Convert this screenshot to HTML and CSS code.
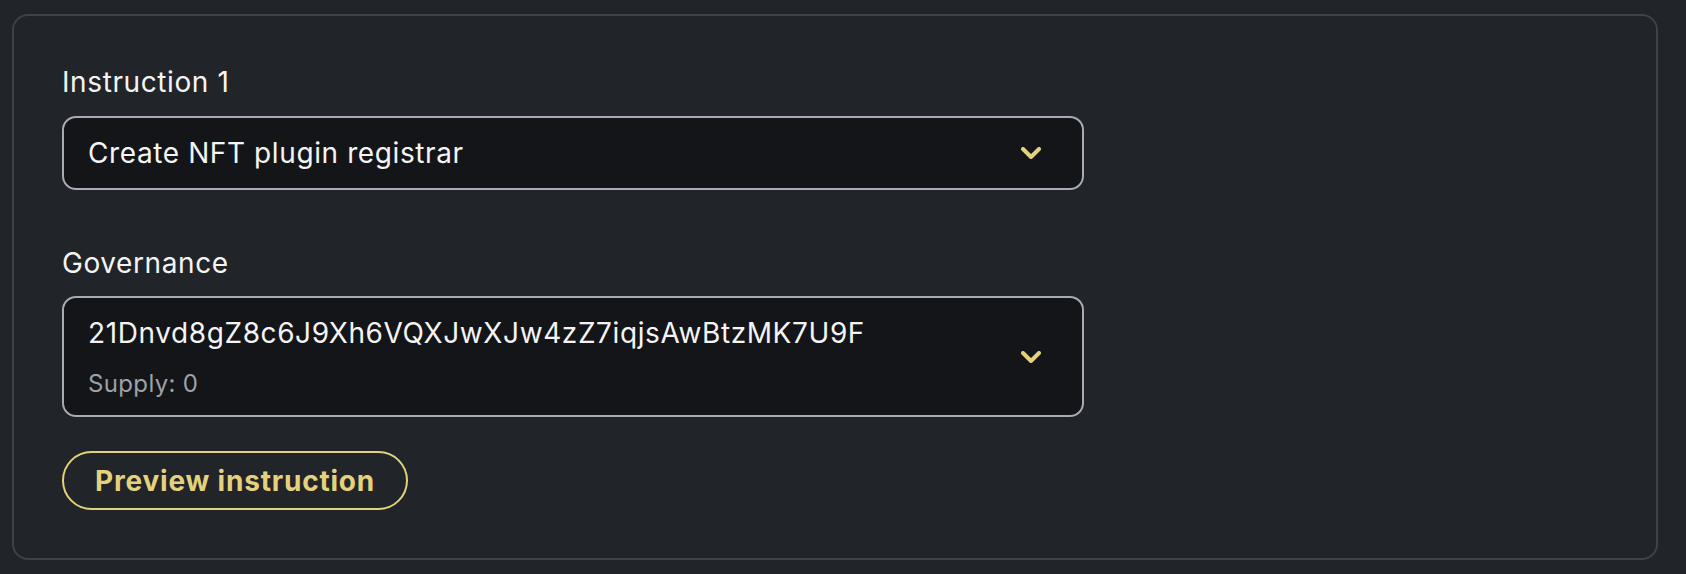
FILE: index.html
```html
<!DOCTYPE html>
<html lang="en">
<head>
<meta charset="utf-8">
<title>Instruction</title>
<link rel="stylesheet" href="styles.css">
</head>
<body>
  <div class="card">
    <div class="field">
      <div class="label">Instruction 1</div>
      <div class="select">
        <div class="select-value">
          <div class="primary">Create NFT plugin registrar</div>
        </div>
        <svg class="chevron" width="20" height="12" viewBox="0 0 20 12" aria-hidden="true"><polyline points="2,2 10,10 18,2" fill="none" stroke="currentColor" stroke-width="4" stroke-linecap="round" stroke-linejoin="round"/></svg>
      </div>
    </div>
    <div class="field field-gov">
      <div class="label label-gov">Governance</div>
      <div class="select select-tall">
        <div class="select-value">
          <div class="primary">21Dnvd8gZ8c6J9Xh6VQXJwXJw4zZ7iqjsAwBtzMK7U9F</div>
          <div class="secondary">Supply: 0</div>
        </div>
        <svg class="chevron" width="20" height="12" viewBox="0 0 20 12" aria-hidden="true"><polyline points="2,2 10,10 18,2" fill="none" stroke="currentColor" stroke-width="4" stroke-linecap="round" stroke-linejoin="round"/></svg>
      </div>
    </div>
    <button class="preview-btn" type="button">Preview instruction</button>
  </div>
</body>
</html>
```
FILE: styles.css
```css
html {
  background: #212429;
}
body {
  margin: 14px 28px 14px 12px;
  background: #212429;
  font-family: Inter, "Noto Sans", sans-serif;
  color: #f4f4f5;
}
.card {
  box-sizing: border-box;
  width: 1646px;
  border: 2px solid #3e4249;
  border-radius: 16px;
  padding: 46px 48px 48px 48px;
  display: flex;
  flex-direction: column;
  align-items: flex-start;
}
.field {
  display: flex;
  flex-direction: column;
  width: 1022px;
}
.field-gov {
  margin-top: 53px;
}
.label {
  font-size: 28px;
  line-height: 40px;
  letter-spacing: 0.6px;
  margin-bottom: 14px;
  color: #f4f4f5;
}
.label-gov {
  margin-bottom: 13px;
}
.select {
  box-sizing: border-box;
  width: 1022px;
  display: flex;
  align-items: center;
  justify-content: space-between;
  background: #141518;
  border: 2px solid #a7abb3;
  border-radius: 14px;
  padding: 15px 41px 15px 24px;
}
.select-tall {
  padding-top: 15px;
  padding-bottom: 15px;
}
.select-value {
  display: flex;
  flex-direction: column;
  gap: 15px;
}
.primary {
  font-size: 28px;
  line-height: 40px;
  letter-spacing: 0.6px;
  color: #f4f4f5;
}
.secondary {
  font-size: 24px;
  line-height: 32px;
  letter-spacing: 0.35px;
  color: #9ca1aa;
}
.chevron {
  color: #e3d17c;
  flex: none;
  display: block;
}
.preview-btn {
  margin-top: 34px;
  box-sizing: border-box;
  height: 59px;
  padding: 0 31px;
  background: transparent;
  border: 2px solid #e3d17c;
  border-radius: 30px;
  color: #e3d17c;
  font-family: Inter, "Noto Sans", sans-serif;
  font-weight: 700;
  font-size: 28px;
  line-height: 40px;
  letter-spacing: 0.8px;
  cursor: pointer;
}
```
